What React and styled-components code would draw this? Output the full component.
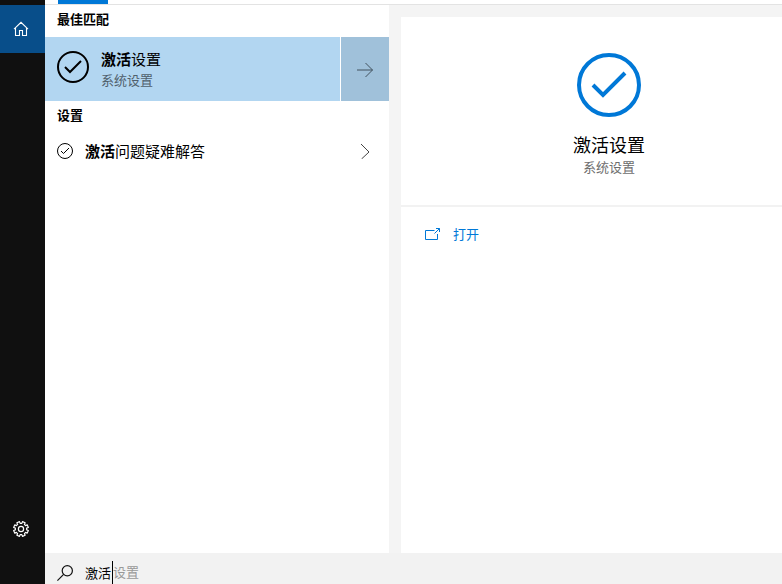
import React, { useState } from "react";
import styled, { createGlobalStyle } from "styled-components";

const GlobalStyle = createGlobalStyle`
  *, *::before, *::after { box-sizing: border-box; }
  body {
    margin: 0;
    overflow: hidden;
    background: #fff;
    color: #000;
    font-family: "Noto Sans CJK SC", sans-serif;
    font-size: 13px;
    line-height: 20px;
  }
  button, input { font: inherit; color: inherit; border: 0; margin: 0; padding: 0; background: none; }
  h1, h2, p { margin: 0; font: inherit; }
  svg { display: block; flex: none; }
`;

const Shell = styled.div`
  display: flex;
  height: 100vh;
`;

const Rail = styled.nav`
  flex: 0 0 45px;
  display: flex;
  flex-direction: column;
  justify-content: space-between;
  padding: 5px 0 31px;
  background: #101010;
`;

const RailButton = styled.button`
  display: flex;
  align-items: center;
  height: 48px;
  padding-left: 13px;
  color: #fff;
  background: ${(p) => (p.$active ? "#084e8a" : "transparent")};
`;

const Main = styled.div`
  flex: 1;
  min-width: 0;
  display: flex;
  flex-direction: column;
`;

const TabStrip = styled.div`
  flex: none;
  height: 5px;
  padding-left: 13px;
  border-bottom: 1px solid #e3e3e3;
`;

const TabMarker = styled.div`
  width: 50px;
  height: 4px;
  background: #0078d7;
`;

const Panes = styled.div`
  flex: 1;
  min-height: 0;
  display: flex;
  background: #f4f4f4;
`;

const Results = styled.section`
  flex: 0 0 344px;
  background: #fff;
`;

const GroupTitle = styled.h2`
  height: 32px;
  padding: 4px 12px;
  font-weight: 700;
`;

const BestMatch = styled.div`
  display: flex;
  gap: 1px;
  height: 64px;
`;

const BestMatchButton = styled.button`
  flex: 1;
  display: flex;
  align-items: flex-start;
  gap: 12px;
  padding: 12px;
  text-align: left;
  background: #b2d6f1;
`;

const BestMatchIcon = styled.span`
  padding-top: 2px;
`;

const ArrowButton = styled.button`
  flex: 0 0 48px;
  display: flex;
  align-items: center;
  justify-content: center;
  color: #43525e;
  background: #a0c1da;
`;

const ResultName = styled.span`
  display: block;
  font-size: 15px;
`;

const ResultKind = styled.span`
  display: block;
  line-height: 22px;
  color: #50606c;
`;

const ResultRow = styled.button`
  display: flex;
  align-items: center;
  gap: 12px;
  width: 100%;
  height: 36px;
  padding: 0 16px 0 12px;
  text-align: left;

  ${ResultName} { flex: 1; }
`;

const Preview = styled.section`
  flex: 1;
  min-width: 0;
  margin: 12px 0 0 12px;
  background: #fff;
`;

const PreviewHeader = styled.header`
  display: flex;
  flex-direction: column;
  align-items: center;
  height: 190px;
  padding: 36px 0 0 35px;
  border-bottom: 2px solid #f2f2f2;
`;

const PreviewTitle = styled.h1`
  margin-top: 15px;
  font-size: 18px;
  line-height: 24px;
`;

const PreviewKind = styled.p`
  line-height: 22px;
  color: #6d6d6d;
`;

const OpenButton = styled.button`
  display: flex;
  align-items: center;
  gap: 12px;
  width: 100%;
  height: 40px;
  margin-top: 7px;
  padding-left: 24px;
  color: #0078d7;
`;

const SearchBar = styled.label`
  flex: 0 0 31px;
  display: flex;
  align-items: flex-start;
  padding: 8px 12px 0;
  background: #f2f2f2;
  overflow: hidden;
`;

const SearchGlyph = styled.span`
  margin: 4px 12px 0 0;
`;

const SearchInput = styled.input`
  width: 27px;
  min-width: 27px;
  height: 22px;
  field-sizing: content;
  outline: none;
`;

const Caret = styled.span`
  width: 1px;
  height: 24px;
  background: #000;
`;

const Completion = styled.span`
  line-height: 22px;
  color: #999;
`;

function CheckCircle({ size, color = "currentColor" }) {
  return (
    <svg width={size} height={size} viewBox="0 0 64 64" fill="none" stroke={color} strokeWidth="4" aria-hidden="true">
      <circle cx="32" cy="32" r="30" />
      <path d="M16 32 L26 42 L48 20" />
    </svg>
  );
}

function HomeIcon() {
  return (
    <svg width="16" height="16" viewBox="0 0 16 16" fill="none" stroke="currentColor" strokeWidth="1.1" aria-hidden="true">
      <path d="M1 8.2 L8 1.3 L15 8.2 M2.5 7 V14.5 H6.5 V9.5 H9.5 V14.5 H13.5 V7" />
    </svg>
  );
}

function GearIcon() {
  const teeth = [];
  const n = 8;
  for (let i = 0; i < n; i++) {
    const base = (i * 360) / n;
    [[-14, 5.7], [-11, 7.5], [11, 7.5], [14, 5.7]].forEach(([offset, r]) => {
      const a = ((base + 22.5 + offset) * Math.PI) / 180;
      teeth.push(`${(8 + r * Math.cos(a)).toFixed(2)} ${(8 + r * Math.sin(a)).toFixed(2)}`);
    });
  }
  return (
    <svg width="16" height="16" viewBox="0 0 16 16" fill="none" stroke="currentColor" strokeWidth="1.2" strokeLinejoin="round" aria-hidden="true">
      <path d={`M${teeth.join(" L")} Z`} />
      <circle cx="8" cy="8" r="2.6" />
    </svg>
  );
}

function ArrowIcon() {
  return (
    <svg width="16" height="16" viewBox="0 0 16 16" fill="none" stroke="currentColor" aria-hidden="true">
      <path d="M0 9 H15.5 M8.5 2 L15.5 9 L8.5 16" />
    </svg>
  );
}

function ChevronIcon() {
  return (
    <svg width="16" height="16" viewBox="0 0 16 16" fill="none" stroke="#444" aria-hidden="true">
      <path d="M4 1 L12 9 L4.5 16" />
    </svg>
  );
}

function OpenIcon() {
  return (
    <svg width="16" height="16" viewBox="0 0 16 16" fill="none" stroke="currentColor" aria-hidden="true">
      <path d="M9.5 4.5 H0.5 V13.5 H12.5 V8 M9.5 7.5 L14.5 2.5 M11 2.5 H14.5 V6" />
    </svg>
  );
}

function SearchIcon() {
  return (
    <svg width="16" height="16" viewBox="0 0 16 16" fill="none" stroke="#111" strokeWidth="1.2" aria-hidden="true">
      <circle cx="10.3" cy="5.7" r="5.1" />
      <path d="M6.6 9.4 L0.4 15.6" />
    </svg>
  );
}

export default function App() {
  const [query, setQuery] = useState("激活");
  return (
    <>
      <GlobalStyle />
      <Shell>
        <Rail>
          <RailButton $active aria-label="主页"><HomeIcon /></RailButton>
          <RailButton aria-label="选项"><GearIcon /></RailButton>
        </Rail>
        <Main>
          <TabStrip><TabMarker /></TabStrip>
          <Panes>
            <Results>
              <GroupTitle>最佳匹配</GroupTitle>
              <BestMatch>
                <BestMatchButton>
                  <BestMatchIcon><CheckCircle size={32} /></BestMatchIcon>
                  <span>
                    <ResultName><b>激活</b>设置</ResultName>
                    <ResultKind>系统设置</ResultKind>
                  </span>
                </BestMatchButton>
                <ArrowButton aria-label="展开"><ArrowIcon /></ArrowButton>
              </BestMatch>
              <GroupTitle>设置</GroupTitle>
              <ResultRow>
                <CheckCircle size={16} />
                <ResultName><b>激活</b>问题疑难解答</ResultName>
                <ChevronIcon />
              </ResultRow>
            </Results>
            <Preview>
              <PreviewHeader>
                <CheckCircle size={64} color="#0078d7" />
                <PreviewTitle>激活设置</PreviewTitle>
                <PreviewKind>系统设置</PreviewKind>
              </PreviewHeader>
              <OpenButton><OpenIcon />打开</OpenButton>
            </Preview>
          </Panes>
          <SearchBar>
            <SearchGlyph><SearchIcon /></SearchGlyph>
            <SearchInput aria-label="搜索" value={query} onChange={(e) => setQuery(e.target.value)} />
            <Caret />
            <Completion>设置</Completion>
          </SearchBar>
        </Main>
      </Shell>
    </>
  );
}
